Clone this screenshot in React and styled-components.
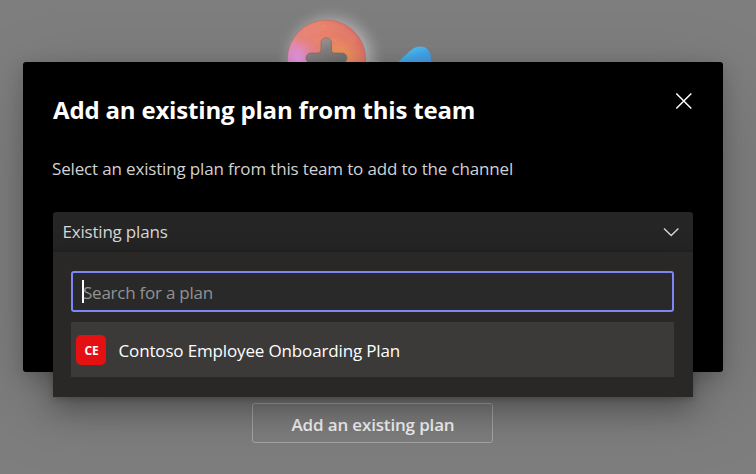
import React from 'react';
import styled, { createGlobalStyle } from 'styled-components';

const GlobalStyle = createGlobalStyle`
  * { box-sizing: border-box; }
  body {
    margin: 0;
    overflow: hidden;
    background: #7e7e7e;
    font-family: 'Segoe UI', 'Open Sans', 'Noto Sans', sans-serif;
    font-size: 17px;
  }
`;

const Page = styled.main`
  position: relative;
  height: 474px;
  overflow: hidden;
  display: flex;
  flex-direction: column;
  align-items: center;
  justify-content: space-between;
  padding: 0 11px 31px 0;
  background: #7e7e7e;
`;

const Illustration = styled.svg`
  width: 180px;
  height: 75px;
  margin-right: 25px;
  flex: none;
`;

const PageButton = styled.button`
  width: 241px;
  height: 40px;
  padding: 2px 0 0 1px;
  border: 1px solid #a6a6a6;
  border-radius: 3px;
  background: transparent;
  color: #f4f4f4;
  font: 600 17px 'Segoe UI', 'Open Sans', sans-serif;
  letter-spacing: -0.16px;
  white-space: nowrap;
`;

const Overlay = styled.div`
  position: absolute;
  inset: 0;
  display: flex;
  align-items: flex-start;
  padding: 62px 33px 0 23px;
`;

const Dialog = styled.section`
  width: 700px;
  height: 310px;
  padding: 30px 30px 0;
  border-radius: 3px;
  background: #000;
  box-shadow: 0 26px 80px rgba(0, 0, 0, 0.18), 0 5px 20px rgba(0, 0, 0, 0.2);
`;

const Header = styled.header`
  display: flex;
  justify-content: space-between;
  height: 60px;
`;

const Title = styled.h1`
  margin: 0;
  color: #fff;
  font-size: 24px;
  font-weight: 700;
  line-height: 36px;
  letter-spacing: -0.18px;
  white-space: nowrap;
`;

const CloseButton = styled.button`
  width: 18px;
  height: 18px;
  padding: 0;
  border: 0;
  background: none;
  color: #fff;
  svg { display: block; }
`;

const Description = styled.p`
  margin: 0 0 0 -1px;
  height: 60px;
  color: #d2d2d2;
  line-height: 33px;
  letter-spacing: -0.16px;
  white-space: nowrap;
`;

const Select = styled.div`
  position: relative;
  width: 640px;
`;

const SelectTrigger = styled.div`
  display: flex;
  align-items: center;
  justify-content: space-between;
  height: 40px;
  padding: 0 14.5px 1px 9.5px;
  border-radius: 3px;
  background: #252525;
  color: #d6d6d6;
  letter-spacing: -0.2px;
`;

const Menu = styled.div`
  position: absolute;
  top: 39px;
  left: 0;
  width: 640px;
  height: 146px;
  padding: 19px 19px 20px 18px;
  border-top: 1px solid #20201f;
  background: #292827;
  box-shadow: 0 12px 28px rgba(0, 0, 0, 0.3), 0 2px 6px rgba(0, 0, 0, 0.18);
`;

const SearchField = styled.div`
  display: flex;
  align-items: center;
  height: 41px;
  padding-left: 9px;
  border: 2px solid #7f85f5;
  border-radius: 3px;
  background: #292929;
  color: #929292;
`;

const Caret = styled.span`
  width: 2px;
  height: 23px;
  margin-right: -1px;
  background: #fff;
`;

const Placeholder = styled.span`
  padding-top: 2px;
  letter-spacing: -0.24px;
`;

const Option = styled.div`
  display: flex;
  align-items: center;
  height: 55px;
  margin-top: 10px;
  padding: 0 5px;
  gap: 12.5px;
  background: #3b3a38;
  color: #fff;
`;

const Avatar = styled.span`
  display: grid;
  place-items: center;
  width: 30px;
  height: 30px;
  padding: 1px 0 0 1px;
  border-radius: 5px;
  background: #e31112;
  font-size: 12px;
  font-weight: 700;
  letter-spacing: -0.3px;
`;

const OptionName = styled.span`
  padding-top: 1px;
  letter-spacing: -0.15px;
  white-space: nowrap;
`;

function PlanIllustration() {
  return (
    <Illustration viewBox="0 0 180 75" aria-hidden="true">
      <defs>
        <radialGradient id="halo">
          <stop offset="0.65" stopColor="#b0b0b0" stopOpacity="0.8" />
          <stop offset="0.8" stopColor="#999" stopOpacity="0.5" />
          <stop offset="1" stopColor="#7e7e7e" stopOpacity="0" />
        </radialGradient>
        <linearGradient id="disc" x1="0.15" y1="0.6" x2="0.85" y2="0.15">
          <stop stopColor="#e190bf" />
          <stop offset="0.25" stopColor="#ea857e" />
          <stop offset="0.65" stopColor="#eb836c" />
          <stop offset="1" stopColor="#df7166" />
        </linearGradient>
        <radialGradient id="glow" cx="0.68" cy="0.5" r="0.3">
          <stop stopColor="#f29a57" />
          <stop offset="1" stopColor="#f29a57" stopOpacity="0" />
        </radialGradient>
        <radialGradient id="violet" cx="0.14" cy="0.5" r="0.27">
          <stop stopColor="#e99bed" />
          <stop offset="1" stopColor="#e58acb" stopOpacity="0" />
        </radialGradient>
        <linearGradient id="metal" gradientUnits="userSpaceOnUse" x1="50" y1="38" x2="62" y2="66">
          <stop stopColor="#a39794" />
          <stop offset="0.45" stopColor="#858180" />
          <stop offset="1" stopColor="#707070" />
        </linearGradient>
        <linearGradient id="check" gradientUnits="userSpaceOnUse" x1="144" y1="46" x2="151" y2="64">
          <stop stopColor="#4fc3f0" />
          <stop offset="0.5" stopColor="#43a9ed" />
          <stop offset="1" stopColor="#459be5" />
        </linearGradient>
      </defs>
      <ellipse cx="61" cy="60" rx="57" ry="57" fill="url(#halo)" />
      <circle cx="56.5" cy="59" r="39" fill="url(#disc)" stroke="#b9665d" strokeWidth="0.6" />
      <path d="M27 43a34 34 0 0 1 58 0" fill="none" stroke="#e78c77" strokeWidth="8" opacity="0.3" />
      <circle cx="56.5" cy="59" r="39" fill="url(#glow)" />
      <circle cx="56.5" cy="59" r="39" fill="url(#violet)" />
      <g fill="#f2a177">
        <circle cx="54" cy="26" r="0.7" />
        <circle cx="47" cy="40" r="0.7" />
        <circle cx="65" cy="40" r="0.7" />
        <circle cx="72" cy="49" r="0.7" />
      </g>
      <path
        d="M51 43a5 5 0 0 1 10.5 0v7q0 3 3 3H72a5 5 0 0 1 0 10H41a5 5 0 0 1 0-10h7q3 0 3-3z"
        fill="url(#metal)"
        stroke="#77706e"
        strokeWidth="0.7"
      />
      <path d="M99 62q4-5 12 0z" fill="#9b9b9b" opacity="0.6" />
      <path d="M126 64l14-13c9-8 21-5 21 8v6h-36z" fill="url(#check)" />
    </Illustration>
  );
}

export default function App() {
  return (
    <>
      <GlobalStyle />
      <Page>
        <PlanIllustration />
        <PageButton>Add an existing plan</PageButton>
        <Overlay>
          <Dialog role="dialog" aria-modal="true">
            <Header>
              <Title>Add an existing plan from this team</Title>
              <CloseButton aria-label="Close">
                <svg width="18" height="18" viewBox="0 0 18 18" fill="none" stroke="currentColor" strokeWidth="1.5">
                  <path d="M1.3 1.5l15 15m0-15l-15 15" />
                </svg>
              </CloseButton>
            </Header>
            <Description>Select an existing plan from this team to add to the channel</Description>
            <Select>
              <SelectTrigger>
                Existing plans
                <svg width="16" height="10" viewBox="0 0 16 10" fill="none" stroke="currentColor" strokeWidth="1.4">
                  <path d="M1 1.4l7.2 7.1 7.2-7.1" />
                </svg>
              </SelectTrigger>
              <Menu>
                <SearchField>
                  <Caret />
                  <Placeholder>Search for a plan</Placeholder>
                </SearchField>
                <Option>
                  <Avatar>CE</Avatar>
                  <OptionName>Contoso Employee Onboarding Plan</OptionName>
                </Option>
              </Menu>
            </Select>
          </Dialog>
        </Overlay>
      </Page>
    </>
  );
}
